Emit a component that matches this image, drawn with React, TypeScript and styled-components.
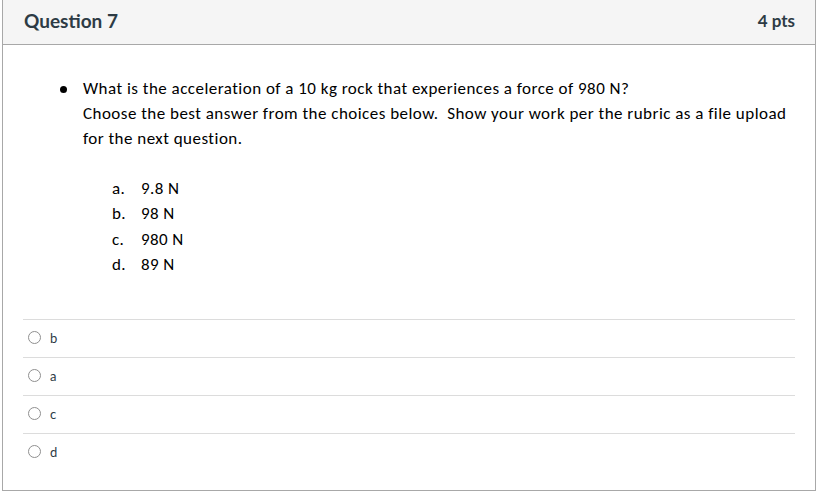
import React from "react";
import styled, { createGlobalStyle } from "styled-components";

const Global = createGlobalStyle`
  html, body { margin: 0; padding: 0; background: #ffffff; }
  body { font-family: Lato, "Noto Sans", sans-serif; color: #2d3b45; }
`;

const Card = styled.div`
  margin-left: 2px;
  width: 812px;
  height: 490px;
  border: 1px solid #a8a8a8;
  border-top: none;
  display: flex;
  flex-direction: column;
  box-sizing: content-box;
  background: #fff;
`;

const Header = styled.div`
  height: 45px;
  background: #f5f5f5;
  border-bottom: 1px solid #a8a8a8;
  display: flex;
  align-items: center;
  justify-content: space-between;
  padding: 0 20px 0 21px;
  box-sizing: border-box;
`;

const Title = styled.h2`
  margin: 0;
  font-family: Lato, sans-serif;
  font-weight: 700;
  font-size: 19px;
  color: #2d3b45;
  padding-bottom: 3px;
`;

const Points = styled.span`
  font-family: Lato, sans-serif;
  font-weight: 700;
  font-size: 17px;
  color: #2d3b45;
  padding-bottom: 3px;
`;

const Body = styled.div`
  padding: 31px 20px 0 20px;
  font-family: Calibri, Carlito, Lato, sans-serif;
  color: #000;
  font-size: 17px;
  letter-spacing: 0.4px;
`;

const Bullets = styled.ul`
  margin: 0;
  padding-left: 60px;
  list-style: none;
  line-height: 25px;
`;

const BulletItem = styled.li`
  position: relative;
  &::before {
    content: "";
    position: absolute;
    left: -23px;
    top: 10px;
    width: 7px;
    height: 7px;
    border-radius: 50%;
    background: #000;
  }
`;

const Para = styled.div`
  letter-spacing: 0.47px;
`;

const Choices = styled.ol`
  list-style: none;
  margin: 25px 0 0 29px;
  padding: 0;
  line-height: 25.3px;
`;

const Choice = styled.li`
  display: flex;
`;

const ChoiceLetter = styled.span`
  width: 29px;
`;

const Answers = styled.div`
  margin: 42px 20px 0 20px;
  display: flex;
  flex-direction: column;
`;

const AnswerRow = styled.label`
  height: 38px;
  border-top: 1px solid #dcdcdc;
  box-sizing: border-box;
  display: flex;
  align-items: center;
  padding-left: 5px;
  gap: 9px;
  font-family: Lato, sans-serif;
  font-size: 13px;
  color: #2d3b45;
  padding-bottom: 2px;
`;

const Radio = styled.span`
  width: 13px;
  height: 13px;
  border-radius: 50%;
  border: 1px solid #8f8f8f;
  box-sizing: border-box;
  background: #fff;
  flex: none;
`;

const choices = [
  ["a.", "9.8 N"],
  ["b.", "98 N"],
  ["c.", "980 N"],
  ["d.", "89 N"],
];

const answers = ["b", "a", "c", "d"];

export default function App() {
  return (
    <>
      <Global />
      <Card>
        <Header>
          <Title>Question 7</Title>
          <Points>4 pts</Points>
        </Header>
        <Body>
          <Bullets>
            <BulletItem>
              <Para>
                What is the acceleration of a 10 kg rock that experiences a force of 980 N?
                <br />
                Choose the best answer from the choices below.&nbsp; Show your work per the rubric as a file upload for the next question.
              </Para>
              <Choices>
                {choices.map(([l, v]) => (
                  <Choice key={l}>
                    <ChoiceLetter>{l}</ChoiceLetter>
                    <span>{v}</span>
                  </Choice>
                ))}
              </Choices>
            </BulletItem>
          </Bullets>
        </Body>
        <Answers>
          {answers.map((a) => (
            <AnswerRow key={a}>
              <Radio />
              <span>{a}</span>
            </AnswerRow>
          ))}
        </Answers>
      </Card>
    </>
  );
}
